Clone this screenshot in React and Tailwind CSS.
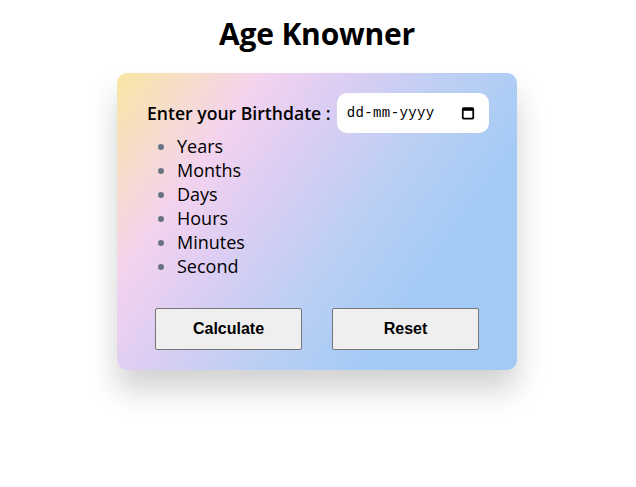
import React from 'react';

const units = ["Years", "Months", "Days", "Hours", "Minutes", "Second"];

const App = () => {
    return (
        <div className="min-h-[487px] w-[634px] bg-white pt-[14px] font-['Open_Sans',sans-serif] text-black">
            <h1 className="text-center text-[30px] font-bold leading-[40px] tracking-[-0.2px]">Age Knowner</h1>

            <div className="mx-auto mt-[19px] w-[400px] rounded-[10px] bg-[linear-gradient(125deg,#f8e7a4_0%,#f3d3ee_24%,#dccdf3_38%,#bccff4_56%,#a3cbf5_75%,#a1caf5_100%)] px-[30px] pt-[20px] pb-[20px] shadow-[0_20px_30px_rgba(0,0,0,0.18)]">
                {/* Birthdate input */}
                <div className="-mr-[2px] flex items-center gap-[6px]">
                    <label className="text-[17.6px] font-semibold whitespace-nowrap">Enter your Birthdate :</label>
                    <div className="flex h-[40px] w-[152px] shrink-0 items-center justify-between rounded-[10px] bg-white pl-[10px] pr-[14px]">
                        <span className="font-['Liberation_Mono',monospace] text-[14px] tracking-[0.4px]">dd-mm-yyyy</span>
                        <svg viewBox="0 0 16 16" className="h-[14px] w-[14px]" fill="none" stroke="black" strokeWidth="2">
                            <rect x="2" y="2.5" width="12" height="12" rx="1" />
                            <line x1="2" y1="4" x2="14" y2="4" strokeWidth="3" />
                        </svg>
                    </div>
                </div>

                {/* Units */}
                <ul className="mt-px list-disc pl-[30px] text-[18px] leading-[24px] marker:text-gray-500">
                    {units.map((u) => (
                        <li key={u}>{u}</li>
                    ))}
                </ul>

                {/* Buttons */}
                <div className="mt-[30px] flex justify-center gap-[30px]">
                    <button className="h-[42px] w-[147px] rounded-[2px] border border-[#767676] bg-[#efefef] font-['Liberation_Sans',sans-serif] text-[16px] font-bold">
                        Calculate
                    </button>
                    <button className="h-[42px] w-[147px] rounded-[2px] border border-[#767676] bg-[#efefef] font-['Liberation_Sans',sans-serif] text-[16px] font-bold">
                        Reset
                    </button>
                </div>
            </div>
        </div>
    );
};

export default App;
